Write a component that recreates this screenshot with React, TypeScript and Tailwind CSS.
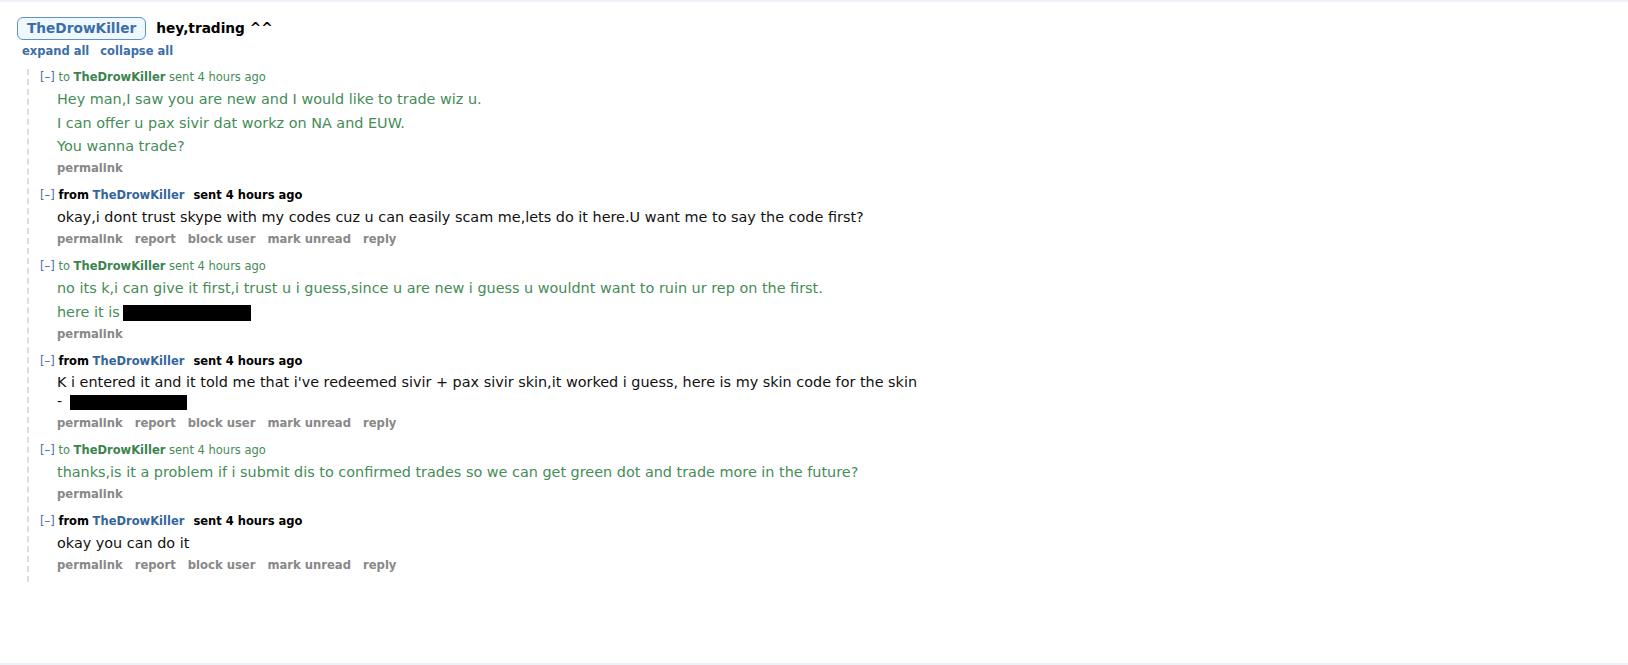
import React from "react";

type Msg = {
  dir: "to" | "from";
  paras: React.ReactNode[];
  tight?: boolean;
};

const Redacted = ({ className }: { className: string }) => (
  <span className={`inline-block bg-black align-[-4px] ${className}`} />
);

const messages: Msg[] = [
  {
    dir: "to",
    paras: [
      "Hey man,I saw you are new and I would like to trade wiz u.",
      "I can offer u pax sivir dat workz on NA and EUW.",
      "You wanna trade?",
    ],
  },
  {
    dir: "from",
    paras: [
      "okay,i dont trust skype with my codes cuz u can easily scam me,lets do it here.U want me to say the code first?",
    ],
  },
  {
    dir: "to",
    paras: [
      "no its k,i can give it first,i trust u i guess,since u are new i guess u wouldnt want to ruin ur rep on the first.",
      <>
        here it is
        <Redacted className="ml-[3px] w-[128px] h-[16px]" />
      </>,
    ],
  },
  {
    dir: "from",
    tight: true,
    paras: [
      <>
        K i entered it and it told me that i&apos;ve redeemed sivir + pax sivir skin,it worked i guess, here is my skin code for the skin
        <br />- <Redacted className="ml-[3px] w-[117px] h-[15px]" />
      </>,
    ],
  },
  {
    dir: "to",
    paras: [
      "thanks,is it a problem if i submit dis to confirmed trades so we can get green dot and trade more in the future?",
    ],
  },
  {
    dir: "from",
    paras: ["okay you can do it"],
  },
];

function Header({ dir }: { dir: "to" | "from" }) {
  if (dir === "to") {
    return (
      <div className="h-[16px] leading-[16px] text-[11.5px] text-[#458c57] whitespace-nowrap">
        <span className="text-[#4a6fa5]">[–]</span> to{" "}
        <span className="font-bold text-[#3c8350]">TheDrowKiller</span> sent 4 hours ago
      </div>
    );
  }
  return (
    <div className="h-[16px] leading-[16px] text-[11.5px] text-black whitespace-nowrap">
      <span className="text-[#4a6fa5]">[–]</span> <span className="font-bold">from</span>{" "}
      <span className="font-bold text-[#336699]">TheDrowKiller</span>
      <span className="ml-[9px] font-bold">sent 4 hours ago</span>
    </div>
  );
}

function Actions({ dir }: { dir: "to" | "from" }) {
  const items = dir === "to" ? ["permalink"] : ["permalink", "report", "block user", "mark unread", "reply"];
  return (
    <div className="flex gap-[12px] h-[16px] leading-[16px] text-[11.6px] font-bold text-[#888888] pl-[28px]">
      {items.map((i) => (
        <span key={i}>{i}</span>
      ))}
    </div>
  );
}

function Message({ m }: { m: Msg }) {
  return (
    <div className="flex flex-col">
      <div className="pl-[11px]">
        <Header dir={m.dir} />
      </div>
      <div
        className={`mt-[4px] pl-[28px] flex flex-col gap-[3.5px] text-[14.4px] ${
          m.tight ? "leading-[19px]" : "leading-[20px]"
        } ${m.dir === "to" ? "text-[#458c57]" : "text-[#111111]"}`}
      >
        {m.paras.map((p, i) => (
          <p key={i}>{p}</p>
        ))}
      </div>
      <div className="mt-[4px]">
        <Actions dir={m.dir} />
      </div>
    </div>
  );
}

export default function App() {
  return (
    <div className="h-[665px] w-full flex flex-col bg-white border-t-2 border-b-2 border-[#edf1f8] font-['DejaVu_Sans','Verdana',sans-serif] overflow-hidden">
      <div className="flex-1 pl-[17px] pt-[15px]">
        <div className="flex items-center gap-[10px]">
          <div className="h-[23px] px-[9px] flex items-center rounded-[6px] border border-[#5f93c8] bg-[#eff7ff] text-[13.7px] font-bold text-[#3b6ea5]">
            TheDrowKiller
          </div>
          <div className="text-[13.7px] font-bold text-black">hey,trading ^^</div>
        </div>
        <div className="mt-[4px] ml-[5px] flex gap-[11px] h-[14px] leading-[14px] text-[11.5px] font-bold text-[#3b6ea5]">
          <span>expand all</span>
          <span>collapse all</span>
        </div>
        <div className="mt-[11px] ml-[10px] w-fit border-l-2 border-dashed border-[#dddddd] pb-[9px] flex flex-col gap-[11px]">
          {messages.map((m, i) => (
            <Message key={i} m={m} />
          ))}
        </div>
      </div>
    </div>
  );
}
